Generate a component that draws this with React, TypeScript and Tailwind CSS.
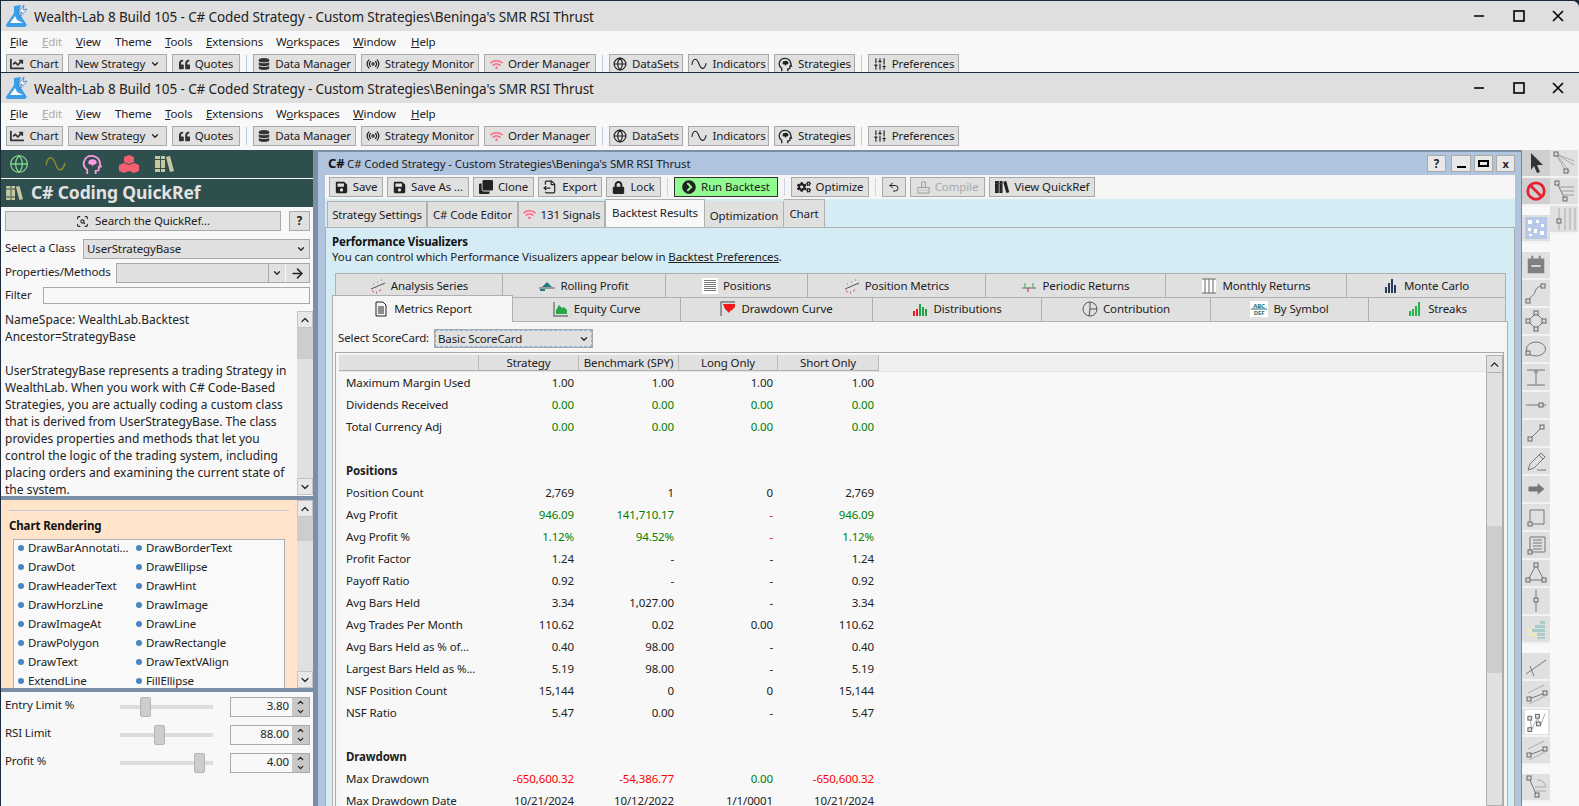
import type { ReactNode } from 'react';
import { ChevronDown, ChevronUp, Globe, Radio, SlidersVertical, ArrowRight, FileOutput, ScanSearch, Undo2 } from 'lucide-react';
import { FaChartLine, FaClone, FaCogs, FaDatabase, FaLock, FaQuoteLeft, FaSave, FaWifi, FaChevronCircleRight } from 'react-icons/fa';

const FONT = "font-['Noto_Sans','Open_Sans',sans-serif]";

const Wave = ({ className = '' }: { className?: string }) => (
  <svg viewBox="0 0 20 14" className={className} fill="none" stroke="currentColor" strokeWidth="1.4">
    <path d="M1 8C3-1 7-1 10 7s7 7 9-1" />
  </svg>
);

const Head = ({ className = '' }: { className?: string }) => (
  <svg viewBox="0 0 20 20" className={className} fill="none" stroke="currentColor" strokeWidth="1.7">
    <path d="M5 19v-4C2 13 1 10 2 7c1-4 5-6 9-5 4 1 6 4 6 7l1 3h-2v3c0 1-1 1-3 1v3" />
    <path d="M6 8c0-2 2-3 4-3s4 1 4 3-2 2-3 2l-1 2-1-2c-2 0-3 0-3-2z" fill="currentColor" stroke="none" />
  </svg>
);

const Books = ({ className = '' }: { className?: string }) => (
  <svg viewBox="0 0 20 18" className={className} fill="currentColor">
    <path d="M0 1h5v16H0zM6 1h4v16H6z" />
    <path d="M11 2l4-1 4 15-4 1z" />
    <path d="M0 4h5v1H0zM0 13h5v1H0zM6 4h4v1H6zM6 13h4v1H6z" fill="#2f4f4f" />
  </svg>
);

const Logo = () => (
  <svg viewBox="0 0 24 24" className="h-[24px] w-[24px] shrink-0">
    <path d="M9 2l7-1-1 3-1 5 8 12-2 2H2L1 21 9 9z" fill="#3c9fe6" />
    <path d="M5 19l5-7 2 4 6 3z" fill="#ffffff" />
    <path d="M19 1l-6 8 4-1-3 6 8-9-4 1z" fill="#ffffff" stroke="#2c7fc8" strokeWidth="0.8" />
  </svg>
);

const WindowButtons = () => (
  <div className="ml-auto flex h-full items-center text-black">
    <svg viewBox="0 0 12 12" className="mr-[28px] h-[12px] w-[12px]"><path d="M1 6h10" stroke="currentColor" strokeWidth="1.6" /></svg>
    <svg viewBox="0 0 12 12" className="mr-[27px] h-[12px] w-[12px]"><rect x="1" y="1" width="10" height="10" fill="none" stroke="currentColor" strokeWidth="1.6" /></svg>
    <svg viewBox="0 0 12 12" className="mr-[15px] h-[12px] w-[12px]"><path d="M1 1l10 10M11 1L1 11" stroke="currentColor" strokeWidth="1.6" /></svg>
  </div>
);

const Sep = () => <div className="mx-[1px] h-[18px] w-[1px] self-center bg-[#b9cbe0]" />;

function Btn({ w, icon, children, extra = '' }: { w: string; icon?: ReactNode; children?: ReactNode; extra?: string }) {
  return (
    <div className={`flex h-[20px] shrink-0 items-center justify-center gap-[5px] whitespace-nowrap border border-[#a9a9a9] bg-[#e0e0e0] text-[11.5px] leading-none text-[#222] ${w} ${extra}`}>
      {icon}
      {children}
    </div>
  );
}

function AppChrome() {
  return (
    <>
      <div className="flex h-[30px] shrink-0 items-center bg-[#dfdfdf] pl-[4px] text-[13.5px] text-[#222]">
        <Logo />
        <span className="ml-[5px] whitespace-nowrap pt-[2px] tracking-[-0.1px]">Wealth-Lab 8 Build 105 - C# Coded Strategy - Custom Strategies\Beninga's SMR RSI Thrust</span>
        <WindowButtons />
      </div>
      <div className="flex h-[23px] shrink-0 items-center pb-[2px] pl-[9px] text-[11.5px] text-[#222]">
        <span className="w-[32px]"><u>F</u>ile</span>
        <span className="w-[34px] text-[#aaa]"><u>E</u>dit</span>
        <span className="w-[39px]"><u>V</u>iew</span>
        <span className="w-[50px]">Theme</span>
        <span className="w-[41px]"><u>T</u>ools</span>
        <span className="w-[70px]"><u>E</u>xtensions</span>
        <span className="w-[77px]">W<u>o</u>rkspaces</span>
        <span className="w-[58px]"><u>W</u>indow</span>
        <span><u>H</u>elp</span>
      </div>
      <div className="flex shrink-0 gap-[5px] pl-[5px]">
        <Btn w="w-[57px]" icon={<FaChartLine className="h-[14px] w-[14px] text-[#333]" />}>Chart</Btn>
        <Btn w="w-[99px]" extra="justify-between px-[4px]">
          New Strategy<ChevronDown className="h-[10px] w-[10px]" strokeWidth={3} />
        </Btn>
        <Btn w="w-[68px]" icon={<FaQuoteLeft className="h-[11px] w-[11px] text-[#333]" />}>Quotes</Btn>
        <Sep />
        <Btn w="w-[103px]" icon={<FaDatabase className="h-[12px] w-[12px] text-[#333]" />}>Data Manager</Btn>
        <Btn w="w-[118px]" icon={<Radio className="h-[14px] w-[14px]" />}>Strategy Monitor</Btn>
        <Btn w="w-[112px]" icon={<FaWifi className="h-[13px] w-[13px] text-[#ff6b80]" />}>Order Manager</Btn>
        <Sep />
        <Btn w="w-[74px]" icon={<Globe className="h-[14px] w-[14px]" />}>DataSets</Btn>
        <Btn w="w-[81px]" icon={<Wave className="h-[12px] w-[16px]" />}>Indicators</Btn>
        <Btn w="w-[81px]" icon={<Head className="h-[15px] w-[15px]" />}>Strategies</Btn>
        <Sep />
        <Btn w="w-[91px]" icon={<SlidersVertical className="h-[14px] w-[14px]" />}>Preferences</Btn>
      </div>
    </>
  );
}

function ScrollBar({ thumb, track, arrowH = 'h-[17px]' }: { thumb: string; track: string; arrowH?: string }) {
  return (
    <div className="flex w-[16px] shrink-0 flex-col bg-[#e0e0e0]">
      <div className={`flex ${arrowH} shrink-0 items-center justify-center border border-[#c4c4c4] bg-[#e8e8e8]`}>
        <ChevronUp className="h-[12px] w-[12px] text-[#222]" strokeWidth={2.4} />
      </div>
      <div className={`shrink-0 bg-[#cdcdcd] ${track}`} />
      <div className={`shrink-0 ${thumb}`} />
      <div className="flex-1" />
      <div className={`flex ${arrowH} shrink-0 items-center justify-center border border-[#c4c4c4] bg-[#e8e8e8]`}>
        <ChevronDown className="h-[12px] w-[12px] text-[#222]" strokeWidth={2.4} />
      </div>
    </div>
  );
}

const DESCRIPTION = [
  'NameSpace: WealthLab.Backtest',
  'Ancestor=StrategyBase',
  '\u00a0',
  'UserStrategyBase represents a trading Strategy in',
  'WealthLab. When you work with C# Code-Based',
  'Strategies, you are actually coding a custom class',
  'that is derived from UserStrategyBase. The class',
  'provides properties and methods that let you',
  'control the logic of the trading system, including',
  'placing orders and examining the current state of',
  'the system.',
];

const METHODS = [
  ['DrawBarAnnotati...', 'DrawBorderText'],
  ['DrawDot', 'DrawEllipse'],
  ['DrawHeaderText', 'DrawHint'],
  ['DrawHorzLine', 'DrawImage'],
  ['DrawImageAt', 'DrawLine'],
  ['DrawPolygon', 'DrawRectangle'],
  ['DrawText', 'DrawTextVAlign'],
  ['ExtendLine', 'FillEllipse'],
];

const PARAMS = [
  { label: 'Entry Limit %', pos: 'ml-[20px]', value: '3.80' },
  { label: 'RSI Limit', pos: 'ml-[34px]', value: '88.00' },
  { label: 'Profit %', pos: 'ml-[74px]', value: '4.00' },
];

function LeftPanel() {
  return (
    <div className="flex h-full w-[312px] shrink-0 flex-col text-[11.5px] text-[#222]">
      <div className="flex h-[28px] shrink-0 items-center gap-[16px] bg-[#2f4f4f] pl-[8px]">
        <Globe className="h-[20px] w-[20px] text-[#7fd08a]" strokeWidth={1.6} />
        <Wave className="h-[16px] w-[21px] text-[#8c8a2c]" />
        <Head className="h-[21px] w-[21px] text-[#ff9ae0]" />
        <svg viewBox="0 0 20 18" className="h-[18px] w-[20px] text-[#f0606e]" fill="currentColor">
          <path d="M10 0l5 2v5l-5 2-5-2V2zM5 8l5 2v6l-5 2-5-2v-6zM15 8l5 2v6l-5 2-5-2v-6z" />
        </svg>
        <Books className="h-[18px] w-[20px] text-[#c8c8a0]" />
      </div>
      <div className="h-[1px] shrink-0 bg-white" />
      <div className="flex h-[28px] shrink-0 items-center gap-[6px] bg-[#2f4f4f] pl-[4px] text-[17.5px] font-bold leading-none text-[#e2e2e2]">
        <Books className="h-[16px] w-[20px] text-[#c8c8a0]" />
        C# Coding QuickRef
      </div>

      <div className="flex shrink-0 flex-col bg-[#f8f8f8] pl-[4px] pr-[2px] pt-[4px]">
        <div className="flex gap-[8px]">
          <div className="flex h-[20px] w-[276px] items-center justify-center gap-[6px] border border-[#a9a9a9] bg-[#e0e0e0]">
            <ScanSearch className="h-[13px] w-[13px]" />Search the QuickRef...
          </div>
          <div className="flex h-[20px] w-[21px] items-center justify-center border border-[#a9a9a9] bg-[#e0e0e0] font-bold">?</div>
        </div>
        <div className="mt-[8px] flex h-[20px] items-center">
          <span className="mb-[2px] w-[78px]">Select a Class</span>
          <div className="flex h-[20px] w-[227px] items-center justify-between border border-[#a9a9a9] bg-[#e0e0e0] px-[3px]">
            UserStrategyBase<ChevronDown className="h-[10px] w-[10px]" strokeWidth={3} />
          </div>
        </div>
        <div className="mt-[4px] flex h-[20px] items-center">
          <span className="mb-[2px] w-[111px]">Properties/Methods</span>
          <div className="flex h-[20px] w-[194px] border border-[#a9a9a9] bg-[#e0e0e0]">
            <div className="flex-1 border-r border-[#a9a9a9]" />
            <div className="flex w-[17px] items-center justify-center border-r border-[#f8f8f8]"><ChevronDown className="h-[10px] w-[10px]" strokeWidth={3} /></div>
            <div className="flex w-[23px] items-center justify-center"><ArrowRight className="h-[15px] w-[15px]" strokeWidth={2.4} /></div>
          </div>
        </div>
        <div className="mt-[4px] flex h-[17px] items-center">
          <span className="mb-[2px] w-[38px]">Filter</span>
          <div className="h-[17px] w-[267px] border border-[#a9a9a9] bg-[#f8f8f8]" />
        </div>
      </div>

      <div className="flex h-[191px] shrink-0 bg-[#f8f8f8] pl-[4px] pt-[7px]">
        <div className="h-full flex-1 overflow-hidden whitespace-nowrap text-[12px] leading-[17px] tracking-normal">
          {DESCRIPTION.map((line, i) => (
            <div key={i}>{line}</div>
          ))}
        </div>
        <ScrollBar track="h-[31px]" thumb="" />
      </div>
      <div className="h-[1px] shrink-0 bg-[#f8f8f8]" />
      <div className="h-[4px] shrink-0 bg-[#7b8fa6]" />

      <div className="flex h-[188px] shrink-0 overflow-hidden bg-[#ffe4c9]">
        <div className="flex-1 overflow-hidden pl-[8px] pt-[10px]">
          <div className="mr-[8px] h-[1px] bg-[#c4cbd8]" />
          <div className="mt-[6px] font-bold text-[#111]">Chart Rendering</div>
          <div className="ml-[4px] mr-[12px] mt-[5px] h-[200px] border border-[#a9b0b8] bg-[#f9f9f9]">
            <div className="-mt-[2px]">
              {METHODS.map(([a, b]) => (
                <div key={a} className="flex h-[19px] items-center">
                  <span className="ml-[4px] h-[6px] w-[6px] rounded-full bg-[#4a86c0]" />
                  <span className="ml-[4px] w-[108px] whitespace-nowrap">{a}</span>
                  <span className="h-[6px] w-[6px] rounded-full bg-[#4a86c0]" />
                  <span className="ml-[4px] whitespace-nowrap">{b}</span>
                </div>
              ))}
            </div>
          </div>
        </div>
        <ScrollBar track="h-[24px]" thumb="" />
      </div>
      <div className="h-[4px] shrink-0 bg-[#7b8fa6]" />

      <div className="flex flex-1 flex-col gap-[8px] bg-[#f8f8f8] pl-[4px] pt-[5px]">
        {PARAMS.map((p) => (
          <div key={p.label} className="flex h-[20px] items-center">
            <span className="mb-[4px] w-[115px] whitespace-nowrap">{p.label}</span>
            <div className="flex h-[20px] w-[93px] items-center bg-[linear-gradient(transparent_8px,#dcdcdc_8px,#dcdcdc_12px,transparent_12px)] outline-none">
              <div className={`h-[20px] w-[11px] rounded-[2px] border border-[#b4b4b4] bg-[#cdcdcd] ${p.pos}`} />
            </div>
            <div className="ml-[17px] flex h-[20px] w-[80px] items-center border border-[#a9a9a9] bg-[#f8f8f8]">
              <span className="flex-1 pb-[2px] pr-[3px] text-right text-[11.5px]">{p.value}</span>
              <div className="flex h-full w-[17px] flex-col items-center justify-center bg-[#c8c8c8]">
                <ChevronUp className="h-[9px] w-[11px]" strokeWidth={3.4} />
                <ChevronDown className="h-[9px] w-[11px]" strokeWidth={3.4} />
              </div>
            </div>
          </div>
        ))}
      </div>
    </div>
  );
}

const TOP_TABS = [
  { label: 'Strategy Settings', w: 'w-[100px]' },
  { label: 'C# Code Editor', w: 'w-[91px]' },
  { label: '131 Signals', w: 'w-[87px]', icon: <FaWifi className="h-[13px] w-[13px] text-[#ff6b80]" /> },
];

const Spark = ({ kind }: { kind: string }) => {
  const cls = 'h-[16px] w-[16px] shrink-0';
  switch (kind) {
    case 'analysis':
      return (
        <svg viewBox="0 0 16 16" className={cls}>
          <path d="M1 11l14-6" stroke="#555" />
          <path d="M3 6h1M7 4h1M11 2h1M13 6h1M3 14h1M6 14h1M9 13h1" stroke="#6a7ea0" />
          <path d="M2 13h1M6 15h1M10 12h1" stroke="#c83030" />
        </svg>
      );
    case 'rolling':
      return (
        <svg viewBox="0 0 16 16" className={cls}>
          <path d="M3 9l5-5 5 5z" fill="#1f7f80" />
          <path d="M0 10h16" stroke="#555" />
          <path d="M1 11h5v2H1z" fill="#1f7f80" />
        </svg>
      );
    case 'positions':
      return (
        <svg viewBox="0 0 16 16" className={cls}>
          <rect width="16" height="16" fill="#fff" />
          <path d="M2 2.5h12M2 4.5h12M2 6.5h12M2 8.5h12M2 10.5h12M2 12.5h12" stroke="#777" />
        </svg>
      );
    case 'periodic':
      return (
        <svg viewBox="0 0 16 16" className={cls}>
          <path d="M1 10h14" stroke="#666" />
          <path d="M4 5v5M12 5v5" stroke="#2fb050" />
          <path d="M7 10v4" stroke="#e02020" />
        </svg>
      );
    case 'monthly':
      return (
        <svg viewBox="0 0 16 16" className={cls}>
          <rect x="1" y="1" width="14" height="14" fill="#fff" />
          <path d="M1 1h14M1 15h14M4 1v14M8 1v14M12 1v14" stroke="#666" />
        </svg>
      );
    case 'monte':
      return (
        <svg viewBox="0 0 16 16" className={cls}>
          <path d="M2 15V9h2v6zM5 15V5h2v10zM8 15V1h2v14zM11 15V7h2v8z" fill="#283a58" />
        </svg>
      );
    case 'metrics':
      return (
        <svg viewBox="0 0 16 16" className={cls} fill="none" stroke="#222">
          <path d="M3 1h7l3 3v11H3z" />
          <path d="M5 6h6M5 8h6M5 10h6M5 12h6" />
        </svg>
      );
    case 'equity':
      return (
        <svg viewBox="0 0 16 16" className={cls}>
          <path d="M1 1v14h14" fill="none" stroke="#777" strokeWidth="1.4" />
          <path d="M3 13V9l3-5 3 3 2-1 3 3v4z" fill="#28a745" />
        </svg>
      );
    case 'drawdown':
      return (
        <svg viewBox="0 0 16 16" className={cls}>
          <path d="M1 15V1h14" fill="none" stroke="#777" strokeWidth="1.4" />
          <path d="M3 3h12v3l-3 3-2 1-1 2-2-2-2-2z" fill="#f01818" />
        </svg>
      );
    case 'dist':
      return (
        <svg viewBox="0 0 16 16" className={cls}>
          <path d="M1 15v-5h2v5zM4 15V8h2v7z" fill="#e02020" />
          <path d="M7 15V3h2v12zM10 15V6h2v9zM13 15v-7h2v7z" fill="#22a045" />
        </svg>
      );
    case 'pie':
      return (
        <svg viewBox="0 0 16 16" className={cls} fill="none" stroke="#555">
          <circle cx="8" cy="8" r="7" />
          <path d="M8 1v7h7M8 8l-1 7" />
        </svg>
      );
    case 'symbol':
      return (
        <svg viewBox="0 0 18 16" className="h-[16px] w-[18px] shrink-0">
          <rect width="18" height="16" fill="#fff" />
          <path d="M1 8h16" stroke="#1f6f70" />
          <text x="9" y="6.5" textAnchor="middle" fontSize="6" fontWeight="700" fill="#1f6f70">ABC</text>
          <text x="9" y="14" textAnchor="middle" fontSize="6" fontWeight="700" fill="#1f6f70">DEF</text>
        </svg>
      );
    default:
      return (
        <svg viewBox="0 0 16 16" className={cls}>
          <path d="M2 15v-5h2v5zM5 15V8h2v7zM8 15V5h2v10zM11 15V1h2v14z" fill="#26b34a" />
        </svg>
      );
  }
};

const VIS_TOP = [
  { label: 'Analysis Series', w: 'w-[168px]', k: 'analysis' },
  { label: 'Rolling Profit', w: 'w-[163px]', k: 'rolling' },
  { label: 'Positions', w: 'w-[142px]', k: 'positions' },
  { label: 'Position Metrics', w: 'w-[178px]', k: 'analysis' },
  { label: 'Periodic Returns', w: 'w-[180px]', k: 'periodic' },
  { label: 'Monthly Returns', w: 'w-[181px]', k: 'monthly' },
  { label: 'Monte Carlo', w: 'w-[159px]', k: 'monte' },
];

const VIS_BOTTOM = [
  { label: 'Equity Curve', w: 'w-[168px]', k: 'equity' },
  { label: 'Drawdown Curve', w: 'w-[192px]', k: 'drawdown' },
  { label: 'Distributions', w: 'w-[169px]', k: 'dist' },
  { label: 'Contribution', w: 'w-[169px]', k: 'pie' },
  { label: 'By Symbol', w: 'w-[158px]', k: 'symbol' },
  { label: 'Streaks', w: 'w-[137px]', k: 'streak' },
];

type Row = { label?: string; head?: string; v?: string[]; tone?: string[] };

const G = 'text-[#008000]';
const R = 'text-[#ff0000]';

const ROWS: Row[] = [
  { label: 'Maximum Margin Used', v: ['1.00', '1.00', '1.00', '1.00'] },
  { label: 'Dividends Received', v: ['0.00', '0.00', '0.00', '0.00'], tone: [G, G, G, G] },
  { label: 'Total Currency Adj', v: ['0.00', '0.00', '0.00', '0.00'], tone: [G, G, G, G] },
  {},
  { head: 'Positions' },
  { label: 'Position Count', v: ['2,769', '1', '0', '2,769'] },
  { label: 'Avg Profit', v: ['946.09', '141,710.17', '-', '946.09'], tone: [G, G, R, G] },
  { label: 'Avg Profit %', v: ['1.12%', '94.52%', '-', '1.12%'], tone: [G, G, R, G] },
  { label: 'Profit Factor', v: ['1.24', '-', '-', '1.24'] },
  { label: 'Payoff Ratio', v: ['0.92', '-', '-', '0.92'] },
  { label: 'Avg Bars Held', v: ['3.34', '1,027.00', '-', '3.34'] },
  { label: 'Avg Trades Per Month', v: ['110.62', '0.02', '0.00', '110.62'] },
  { label: 'Avg Bars Held as % of...', v: ['0.40', '98.00', '-', '0.40'] },
  { label: 'Largest Bars Held as %...', v: ['5.19', '98.00', '-', '5.19'] },
  { label: 'NSF Position Count', v: ['15,144', '0', '0', '15,144'] },
  { label: 'NSF Ratio', v: ['5.47', '0.00', '-', '5.47'] },
  {},
  { head: 'Drawdown' },
  { label: 'Max Drawdown', v: ['-650,600.32', '-54,386.77', '0.00', '-650,600.32'], tone: [R, R, G, R] },
  { label: 'Max Drawdown Date', v: ['10/21/2024', '10/12/2022', '1/1/0001', '10/21/2024'] },
];

const COLS = ['w-[100px]', 'w-[100px]', 'w-[99px]', 'w-[101px]'];

function MetricsGrid() {
  return (
    <div className="ml-[2px] mr-[3px] mt-[4px] flex min-h-0 flex-1 border-l border-r border-t border-[#a9a9a9] pl-[3px] pt-[2px]">
      <div className="min-w-0 flex-1 overflow-hidden bg-[#f8f8f8]">
        <div className="flex h-[17px] border-b border-[#e4e4e4] bg-[#f0f0f0] text-center">
          <div className="flex w-[540px] shrink-0 border-b border-[#b0b0b0] bg-[#e0e0e0]">
            <div className="w-[140px] border-r border-[#b8b8b8]" />
            {['Strategy', 'Benchmark (SPY)', 'Long Only', 'Short Only'].map((h, i) => (
              <div key={h} className={`${COLS[i]} whitespace-nowrap border-r border-[#b8b8b8] leading-[16px]`}>{h}</div>
            ))}
          </div>
        </div>
        {ROWS.map((r, i) => (
          <div key={i} className="flex h-[22px] items-center pb-[2px]">
            <div className={`w-[140px] shrink-0 whitespace-nowrap pl-[7px] ${r.head ? 'font-bold' : ''}`}>{r.label ?? r.head}</div>
            {r.v?.map((v, j) => (
              <div key={j} className={`${COLS[j]} shrink-0 pr-[5px] text-right ${r.tone ? r.tone[j] : ''}`}>{v}</div>
            ))}
          </div>
        ))}
      </div>
      <div className="w-[17px] shrink-0">
        <div className="flex h-full flex-col border border-[#b0b0b0] bg-[#e0e0e0]">
          <div className="flex h-[17px] shrink-0 items-center justify-center border-b border-[#b0b0b0]">
            <ChevronUp className="h-[13px] w-[13px] text-[#222]" strokeWidth={2.4} />
          </div>
          <div className="h-[153px] shrink-0" />
          <div className="h-[147px] shrink-0 bg-[#cdcdcd]" />
          <div className="flex-1" />
        </div>
      </div>
    </div>
  );
}

function StrategyWindow() {
  return (
    <div className="flex h-full min-w-0 flex-1 flex-col text-[11.5px] text-[#222]">
      <div className="h-[2px] shrink-0 bg-[#7b8fa6]" />
      <div className="flex min-h-0 flex-1 border-r border-[#6f8aa5] bg-[#b0c4de] pl-[7px] pr-[6px]">
        <div className="flex min-w-0 flex-1 flex-col">
          <div className="flex h-[23px] shrink-0 items-center bg-[#b0c4de] pl-[3px]">
            <span className="w-[19px] text-[13px] font-bold leading-none text-[#111]">C#</span>
            <span className="whitespace-nowrap">C# Coded Strategy - Custom Strategies\Beninga's SMR RSI Thrust</span>
            <div className="ml-auto flex gap-[5px]">
              <div className="flex h-[17px] w-[19px] items-center justify-center border border-[#a9a9a9] bg-[#e8e8e8] font-bold">?</div>
              <div className="flex gap-[3px]">
                <div className="flex h-[17px] w-[20px] items-center justify-center border border-[#a9a9a9] bg-[#e8e8e8]"><div className="mt-[6px] h-[2px] w-[9px] bg-black" /></div>
                <div className="flex h-[17px] w-[19px] items-center justify-center border border-[#a9a9a9] bg-[#e8e8e8]"><div className="h-[7px] w-[11px] border-2 border-black" /></div>
                <div className="flex h-[17px] w-[19px] items-center justify-center border border-[#a9a9a9] bg-[#e8e8e8] text-[11px] font-bold leading-none">x</div>
              </div>
            </div>
          </div>

          <div className="flex h-[24px] shrink-0 items-center gap-[4px] bg-[#f5f5f5] pl-[4px]">
            <Btn w="w-[54px]" icon={<FaSave className="h-[13px] w-[13px]" />}>Save</Btn>
            <Btn w="w-[82px]" icon={<FaSave className="h-[13px] w-[13px]" />}>Save As ...</Btn>
            <Btn w="w-[61px]" icon={<FaClone className="h-[14px] w-[14px]" />}>Clone</Btn>
            <Btn w="w-[64px]" icon={<FileOutput className="h-[14px] w-[14px]" />}>Export</Btn>
            <Btn w="w-[55px]" icon={<FaLock className="h-[13px] w-[13px]" />}>Lock</Btn>
            <div className="mx-[2px] h-[18px] w-[1px] bg-[#c8d6e6]" />
            <Btn w="w-[104px]" extra="!bg-[#90fb90] !border-[#333]" icon={<FaChevronCircleRight className="h-[14px] w-[14px]" />}>Run Backtest</Btn>
            <div className="mx-[2px] h-[18px] w-[1px] bg-[#c8d6e6]" />
            <Btn w="w-[78px]" icon={<FaCogs className="h-[14px] w-[14px]" />}>Optimize</Btn>
            <div className="mx-[2px] h-[18px] w-[1px] bg-[#c8d6e6]" />
            <Btn w="w-[24px]" icon={<Undo2 className="h-[12px] w-[12px]" />} />
            <Btn w="w-[75px]" extra="!text-[#aaa]" icon={<svg viewBox="0 0 14 14" className="h-[13px] w-[13px]" fill="none" stroke="#999"><path d="M1 7h12v6H1zM5 7V1h4v6M4 10h1M7 10h1M10 10h1" /></svg>}>Compile</Btn>
            <Btn w="w-[106px]" icon={<Books className="h-[14px] w-[15px] text-[#222]" />}>View QuickRef</Btn>
          </div>

          <div className="flex min-h-0 flex-1 flex-col bg-[#d5ecf4]">
            <div className="flex h-[28px] shrink-0 items-end pl-[2px]">
              {TOP_TABS.map((t) => (
                <div key={t.label} className={`flex h-[26px] items-center justify-center gap-[5px] whitespace-nowrap border border-b-0 border-[#b0b0b0] bg-[#e0e0e0] ${t.w}`}>
                  {t.icon}
                  {t.label}
                </div>
              ))}
              <div className="flex h-[28px] w-[100px] items-center justify-center border border-b-0 border-[#b0b0b0] bg-[#f8f8f8] pb-[1px]">Backtest Results</div>
              <div className="flex h-[26px] w-[79px] items-center justify-center border-r border-[#b0b0b0] bg-[#e0e0e0] pt-[3px]">Optimization</div>
              <div className="flex h-[28px] w-[41px] items-center justify-center border border-b-0 border-l-0 border-[#b0b0b0] bg-[#e0e0e0]">Chart</div>
            </div>
            <div className="flex min-h-0 flex-1 flex-col border-l border-r border-t border-[#b0b0b0] pl-[6px] pr-[6px] pt-[7px]">
              <div className="font-bold leading-[14px] text-[#111]">Performance Visualizers</div>
              <div className="leading-[15px]">You can control which Performance Visualizers appear below in <u>Backtest Preferences</u>.</div>

              <div className="mt-[9px] flex h-[24px] shrink-0 pl-[3px]">
                {VIS_TOP.map((t) => (
                  <div key={t.label} className={`flex h-[25px] items-center justify-center gap-[5px] border border-b-0 border-l-0 first:border-l border-[#b0b0b0] bg-[#e0e0e0] pb-[1px] ${t.w}`}>
                    <Spark kind={t.k} />{t.label}
                  </div>
                ))}
              </div>
              <div className="z-10 flex h-[24px] shrink-0">
                <div className="-mt-[2px] flex h-[27px] w-[181px] items-center justify-center gap-[5px] border border-b-0 border-[#b0b0b0] bg-[#f5f5f5]">
                  <Spark kind="metrics" />Metrics Report
                </div>
                {VIS_BOTTOM.map((t) => (
                  <div key={t.label} className={`flex h-[24px] items-center justify-center gap-[5px] border-r border-t border-[#b0b0b0] bg-[#e0e0e0] pb-[1px] ${t.w}`}>
                    <Spark kind={t.k} />{t.label}
                  </div>
                ))}
              </div>

              <div className="flex min-h-0 flex-1 flex-col border-l border-r border-t border-[#b0b0b0] bg-[#f5f5f5]">
                <div className="mt-[7px] flex shrink-0 items-center pl-[5px]">
                  <span className="mb-[2px] w-[96px] whitespace-nowrap">Select ScoreCard:</span>
                  <div className="flex h-[19px] w-[159px] items-center justify-between border border-[#a9a9a9] bg-[#e0e0e0] px-[3px] outline-1 -outline-offset-2 outline-dashed outline-[#7fb4e8]">
                    Basic ScoreCard<ChevronDown className="h-[10px] w-[10px]" strokeWidth={3} />
                  </div>
                </div>
                <MetricsGrid />
              </div>
            </div>
          </div>
        </div>
      </div>
    </div>
  );
}

const ToolIcon = ({ children }: { children: ReactNode }) => (
  <svg viewBox="0 0 24 24" className="h-[24px] w-[24px]" fill="none" stroke="#777" strokeWidth="1">
    {children}
  </svg>
);

const Node = ({ x, y }: { x: number; y: number }) => <rect x={x - 2} y={y - 2} width="4" height="4" fill="#ddd" stroke="#666" />;

function ToolBtn({ children, dark = false, white = false }: { children: ReactNode; dark?: boolean; white?: boolean }) {
  return (
    <div className={`flex h-[28px] w-[28px] shrink-0 items-center justify-center border-b-2 border-[#f2f2f2] ${dark ? 'bg-[#cfcfcf]' : 'bg-[#e0e0e0]'}`}>
      {white ? <div className="flex h-[24px] w-[23px] items-center justify-center bg-white">{children}</div> : children}
    </div>
  );
}

function ToolStrip() {
  return (
    <div className="flex h-full w-[57px] shrink-0 bg-[#f8f8f8]">
      <div className="flex w-[28px] shrink-0 flex-col">
        <ToolBtn dark><svg viewBox="0 0 24 24" className="h-[24px] w-[24px]"><path d="M7 2l12 12h-6l3 7-3 1-3-7-3 4z" fill="#333" /></svg></ToolBtn>
        <ToolBtn dark><svg viewBox="0 0 24 24" className="h-[22px] w-[22px]" fill="none" stroke="#e8202c" strokeWidth="3"><circle cx="12" cy="12" r="9" /><path d="M6 6l12 12" /></svg></ToolBtn>
        <div className="h-[9px] shrink-0" />
        <ToolBtn>
          <svg viewBox="0 0 22 22" className="h-[22px] w-[22px]"><rect width="22" height="22" fill="#b8c8e8" /><path d="M3 3h4v4H3zM11 3h3v3h-3zM16 7h3v3h-3zM3 11h3v3H3zM9 12h3v4H9zM15 14h4v4h-4zM4 17h3v2H4z" fill="#fff" /></svg>
        </ToolBtn>
        <div className="h-[9px] shrink-0" />
        <ToolBtn><svg viewBox="0 0 24 24" className="h-[22px] w-[22px]" fill="#808080"><path d="M3 5h18v16H3zM7 2h2v4H7zM15 2h2v4h-2z" /><path d="M7 12h10v2H7z" fill="#e0e0e0" /></svg></ToolBtn>
        <ToolBtn><ToolIcon><path d="M5 21c0-7 5-5 6-10s5-6 8-6" /><Node x={19} y={5} /><Node x={4} y={20} /></ToolIcon></ToolBtn>
        <ToolBtn><ToolIcon><path d="M12 4l8 8-8 8-8-8z" /><Node x={12} y={4} /><Node x={20} y={12} /><Node x={12} y={20} /><Node x={4} y={12} /></ToolIcon></ToolBtn>
        <ToolBtn><ToolIcon><ellipse cx="12" cy="12" rx="9.5" ry="7" /><Node x={4} y={16} /></ToolIcon></ToolBtn>
        <ToolBtn><ToolIcon><path d="M3 5h18M3 20h18M12 20V5M10 8l2-3 2 3" /></ToolIcon></ToolBtn>
        <ToolBtn><ToolIcon><path d="M2 12h20" /><Node x={17} y={12} /></ToolIcon></ToolBtn>
        <ToolBtn><ToolIcon><path d="M6 18L18 6" /><Node x={18} y={6} /><Node x={6} y={18} /></ToolIcon></ToolBtn>
        <ToolBtn><ToolIcon><path d="M4 21l2-6L17 4l4 4-11 11zM15 6l4 4M13 21h9" /></ToolIcon></ToolBtn>
        <ToolBtn><svg viewBox="0 0 24 24" className="h-[20px] w-[20px]" fill="#777"><path d="M3 9h11V5l8 7-8 7v-4H3z" /></svg></ToolBtn>
        <ToolBtn><ToolIcon><path d="M6 5h14v14H6z" /><Node x={6} y={19} /></ToolIcon></ToolBtn>
        <ToolBtn><ToolIcon><path d="M6 4h15v15H6zM9 7h9M9 10h9M9 13h9M9 16h9" /><Node x={6} y={19} /></ToolIcon></ToolBtn>
        <ToolBtn><ToolIcon><path d="M12 4l8 15H4z" /><Node x={12} y={4} /><Node x={20} y={19} /><Node x={4} y={19} /></ToolIcon></ToolBtn>
        <ToolBtn><ToolIcon><path d="M12 1v22" /><Node x={12} y={11} /></ToolIcon></ToolBtn>
        <ToolBtn><svg viewBox="0 0 24 24" className="h-[24px] w-[24px]"><path d="M16 4h5v3h-5zM11 8h10v3H11z" fill="#a8ccc8" /><path d="M3 12h5v3H3zM6 16h7v3H6z" fill="#f0e8b8" /><path d="M8 12h13v3H8zM13 16h8v3h-8zM13 20h8v2h-8z" fill="#a8ccc8" /></svg></ToolBtn>
        <div className="h-[9px] shrink-0" />
        <ToolBtn><ToolIcon><path d="M2 20L22 6M6 12l4 10" /></ToolIcon></ToolBtn>
        <ToolBtn><ToolIcon><path d="M4 11L20 3M5 22l16-8" stroke="#aaa" /><path d="M5 17l16-6" /><Node x={5} y={17} /><Node x={21} y={11} /></ToolIcon></ToolBtn>
        <ToolBtn white><ToolIcon><path d="M5 6l2 14 6-12 3 8 5-13" stroke="#aaa" /><Node x={5} y={8} /><Node x={13} y={6} /><Node x={14} y={14} /><Node x={5} y={20} /></ToolIcon></ToolBtn>
        <ToolBtn><ToolIcon><path d="M4 11L20 3M5 22l16-8" stroke="#aaa" /><path d="M5 17l16-6" /><Node x={5} y={17} /><Node x={21} y={11} /></ToolIcon></ToolBtn>
        <div className="h-[9px] shrink-0" />
        <ToolBtn><ToolIcon><path d="M5 3l8 18" /><path d="M13 5c5 0 8 3 9 7M11 12h11M12 16h10" stroke="#aaa" /><Node x={5} y={3} /><Node x={13} y={20} /></ToolIcon></ToolBtn>
      </div>
      <div className="flex w-[28px] shrink-0 flex-col">
        <ToolBtn><ToolIcon><path d="M4 3l10 18M4 3l18 11M4 3l18 7M4 3l14 18" stroke="#aaa" /><Node x={4} y={3} /><Node x={14} y={20} /></ToolIcon></ToolBtn>
        <ToolBtn><ToolIcon><path d="M5 4l8 16" /><path d="M8 8h14M10 12h12M12 16h10" stroke="#999" /><Node x={5} y={4} /><Node x={13} y={20} /></ToolIcon></ToolBtn>
        <ToolBtn><ToolIcon><path d="M7 1v22M13 1v22M18 1v22M23 1v22" stroke="#aaa" /><Node x={7} y={14} /></ToolIcon></ToolBtn>
      </div>
    </div>
  );
}

export default function App() {
  return (
    <div className={`flex h-[806px] w-[1579px] flex-col overflow-hidden bg-[#1c2b3a] tracking-[-0.12px] ${FONT}`}>
      <div className="mt-[1px] flex h-[71px] shrink-0 flex-col overflow-hidden rounded-tr-[7px] border-l border-[#1c2b3a] bg-[#f8f8f8]">
        <AppChrome />
      </div>
      <div className="h-[1px] shrink-0 bg-[#1c2b3a]" />
      <div className="flex min-h-0 flex-1 flex-col rounded-tr-[7px] border-l border-[#1c2b3a] bg-[#f8f8f8]">
        <AppChrome />
        <div className="mt-[4px] flex min-h-0 flex-1">
          <LeftPanel />
          <div className="h-full w-[5px] shrink-0 bg-[#7b8fa6]" />
          <StrategyWindow />
          <ToolStrip />
        </div>
      </div>
    </div>
  );
}
